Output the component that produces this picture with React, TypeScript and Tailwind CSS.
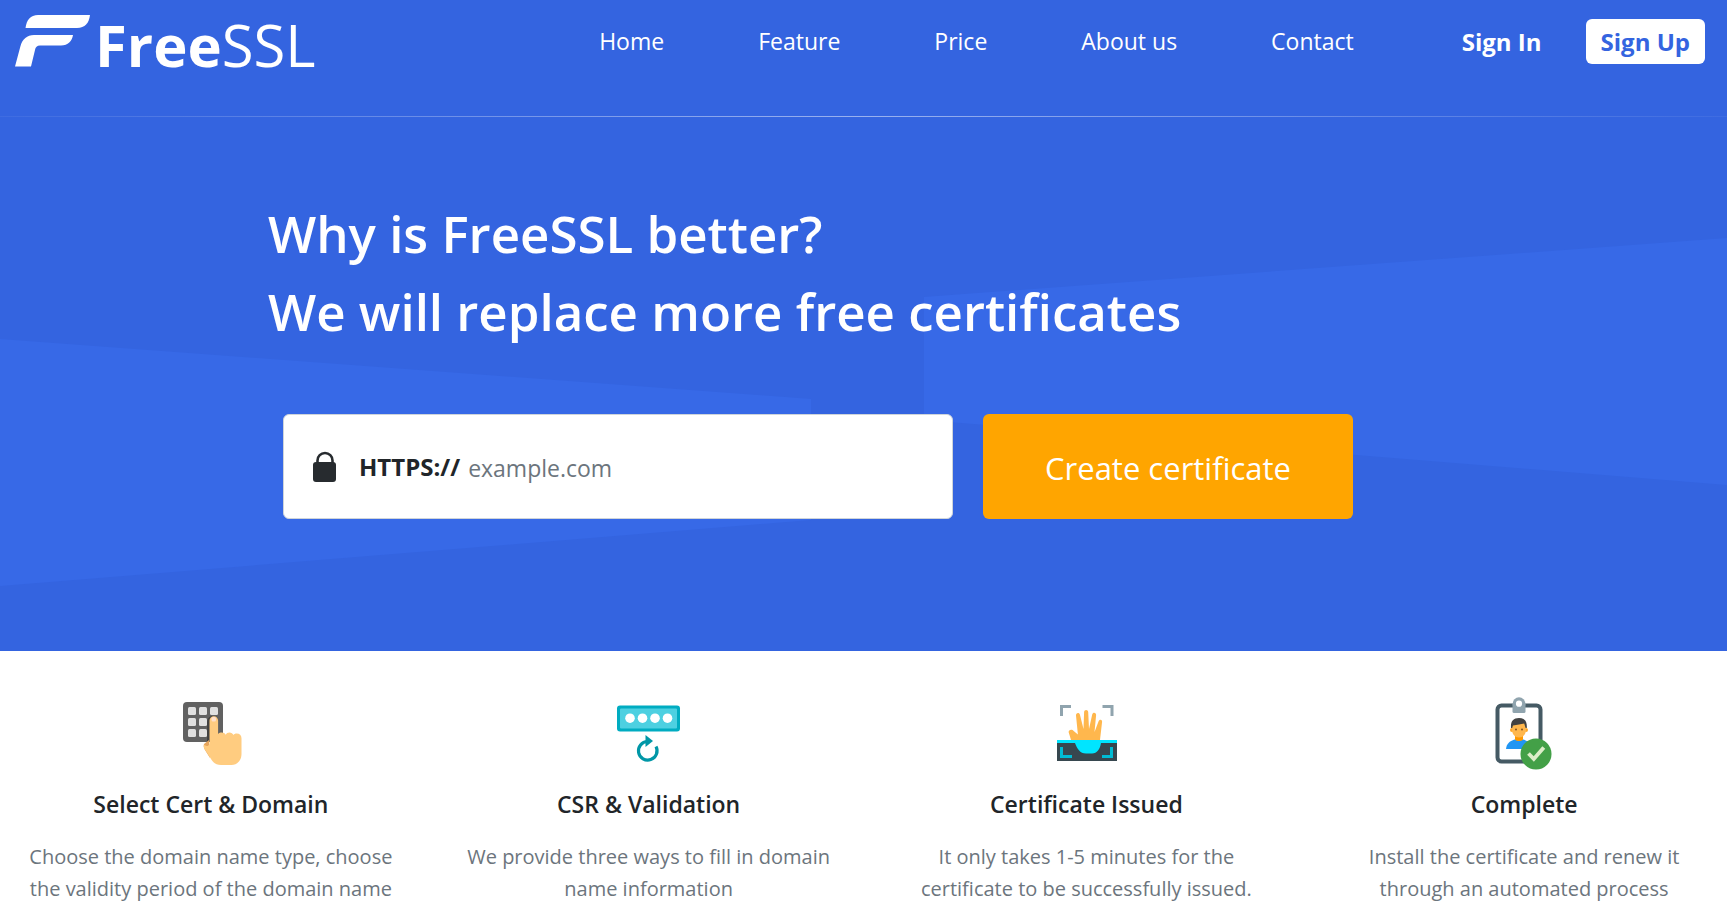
import React, { useState } from "react";

interface Step {
  title: string;
  text: string;
  icon: React.ReactElement;
}

const navLinks = [
  { label: "Home", href: "#home" },
  { label: "Feature", href: "#feature" },
  { label: "Price", href: "#price" },
  { label: "About us", href: "#about" },
  { label: "Contact", href: "#contact" },
];

function KeypadIcon() {
  return (
    <svg className="h-18 w-18 overflow-visible" viewBox="0 0 72 72" aria-hidden="true">
      <rect x="8" y="6" width="40" height="40" rx="4" fill="#616161" />
      <g fill="#e0e0e0">
        <rect x="13" y="11" width="8" height="8" rx="1.5" />
        <rect x="24" y="11" width="8" height="8" rx="1.5" />
        <rect x="35" y="11" width="8" height="8" rx="1.5" />
        <rect x="13" y="22" width="8" height="8" rx="1.5" />
        <rect x="24" y="22" width="8" height="8" rx="1.5" />
        <rect x="13" y="33" width="8" height="8" rx="1.5" />
        <rect x="24" y="33" width="8" height="8" rx="1.5" />
      </g>
      <path d="M32 46V26c0-3 2-5.500 5-6l6 3v23z" fill="#424242" />
      <path d="M34 44l-5 4c-1 2 0 4 1 6l5 8z" fill="#e6a45b" />
      <path
        d="M34.500 24.500a4.300 4.300 0 0 1 8.600 0V38c1-1.200 2.200-1.600 3.600-1.600 2 0 3.200.8 4 2.300.9-1.600 2-2.300 3.700-2.300 2 0 3.300 1 4 2.700.8-1 1.800-1.500 3.200-1.500 3 0 4.900 2 4.900 4.700V58c0 6-4 11-10 11H46c-4 0-7-1.500-9-4.500L29.500 53c-.8-1.300-.8-3 0-4.300 2 2.200 4 1.500 5-1z"
        fill="#ffcc80"
      />
      <rect x="36.500" y="21" width="4.500" height="4.500" rx="1.500" fill="#ffe0cc" />
    </svg>
  );
}

function PasswordIcon() {
  return (
    <svg className="h-18 w-18 overflow-visible" viewBox="0 0 72 72" aria-hidden="true">
      <rect x="4" y="9.500" width="63" height="26" rx="3" fill="#00acc1" />
      <rect x="7" y="12.500" width="57" height="20" rx="1" fill="#4dd0e1" />
      <g fill="#fff">
        <circle cx="17" cy="22.200" r="4.800" />
        <circle cx="29.500" cy="22.200" r="4.800" />
        <circle cx="42" cy="22.200" r="4.800" />
        <circle cx="54.500" cy="22.200" r="4.800" />
      </g>
      <path
        d="M34.500 45.500A9.300 9.300 0 1 0 43 50.500"
        fill="none"
        stroke="#0097a7"
        strokeWidth="3.200"
      />
      <path d="M32.500 39l7.500 6-7.500 6z" fill="#0097a7" />
    </svg>
  );
}

function ScanHandIcon() {
  return (
    <svg className="h-18 w-18 overflow-visible" viewBox="0 0 72 72" aria-hidden="true">
      <path
        d="M10 20V9h11v3h-8v8zM63.500 20V9h-11v3h8v8z"
        fill="#90a4ae"
      />
      <path
        d="M21 44l-1.500-5-.8-2.500c-.5-3 3.500-3.500 5-1.500l4.200 3.500L26 19.500c-.3-2.800 3.400-3.400 4-.6L33.500 33l.6-17c.1-2.800 4-2.800 4.100 0L39 33l3.200-14.500c.7-2.700 4.300-2 3.900.8L44.500 36l4.200-11c1-2.200 3.600-1.600 3.400.7L50 44z"
        fill="#ffb74d"
      />
      <path d="M7 44h60v21H7z" fill="#37474f" />
      <path d="M7 44h60v3H51c-1 6-4 10.500-9 10.500h-6c-6 0-9-5-11-10.500H7z" fill="#00e5ff" />
      <path
        d="M10 51h3v8h9v3H10zM63 51h-3v8h-8v3h11z"
        fill="#00bcd4"
      />
    </svg>
  );
}

function BadgeIcon() {
  return (
    <svg className="h-18 w-18 overflow-visible" viewBox="0 0 72 72" aria-hidden="true">
      <rect x="9.500" y="9.500" width="43" height="56" rx="4" fill="#fff" stroke="#455a64" strokeWidth="4" />
      <rect x="24.500" y="7" width="13" height="10" rx="1.500" fill="#90a4ae" />
      <circle cx="31" cy="7.700" r="6.400" fill="#90a4ae" />
      <circle cx="31" cy="7.700" r="3.100" fill="#fff" />
      <path d="M18 53c.5-5 3.500-8 8.500-9.500h9c5 1.500 8 4.500 8.500 9.500z" fill="#2196f3" />
      <path d="M27 40h8v3.500c-1.500 2-6.500 2-8 0z" fill="#ff9800" />
      <circle cx="24" cy="34" r="2" fill="#ffa726" />
      <circle cx="38" cy="34" r="2" fill="#ffa726" />
      <path d="M24 28c0-5 14-5 14 0v6c0 4-3 7.500-7 7.500s-7-3.500-7-7.500z" fill="#ffb74d" />
      <path d="M23 32c-.5-6.500 2-10 8-10 6.200 0 8.200 4 7.800 10h-1.200l-1.400-4.500-5.200 1-6 1-.8 2.500z" fill="#424242" />
      <circle cx="28" cy="33.500" r=".9" fill="#784719" />
      <circle cx="34" cy="33.500" r=".9" fill="#784719" />
      <circle cx="48" cy="58" r="15.500" fill="#43a047" />
      <path d="M40.500 57.500l5.300 5.500 10-11.500" fill="none" stroke="#dcedc8" strokeWidth="3.800" />
    </svg>
  );
}

const steps: Step[] = [
  {
    title: "Select Cert & Domain",
    text: "Choose the domain name type, choose the validity period of the domain name",
    icon: <KeypadIcon />,
  },
  {
    title: "CSR & Validation",
    text: "We provide three ways to fill in domain name information",
    icon: <PasswordIcon />,
  },
  {
    title: "Certificate Issued",
    text: "It only takes 1-5 minutes for the certificate to be successfully issued.",
    icon: <ScanHandIcon />,
  },
  {
    title: "Complete",
    text: "Install the certificate and renew it through an automated process",
    icon: <BadgeIcon />,
  },
];

function Logo() {
  return (
    <a href="#home" className="flex items-start" aria-label="FreeSSL">
      <svg className="mt-3.5 h-14 w-20" viewBox="0 0 80 56" fill="#fff" aria-hidden="true">
        <path d="M10.500 14C11.500 6 15.500 1 23 1H75C74 9 70 14 62 14z" />
        <path d="M0 52.500L5.500 32C7.500 25 12 21 19 21H58C57 27 53 31.500 46 31.500H25C22 31.500 20.500 33 20 36L16 52.500z" />
      </svg>
      <span className="mt-[7px] text-[58px] leading-[76px]">
        <span className="font-bold">Free</span>
        <span>SSL</span>
      </span>
    </a>
  );
}

function Header() {
  return (
    <header>
      <div className="flex h-29 items-start justify-between pr-[22px] pl-[15px]">
        <Logo />
        <div className="flex items-center pt-[19px]">
          <nav className="flex gap-[94px] text-[23px] leading-[45px]">
            {navLinks.map((link) => (
              <a key={link.label} href={link.href}>
                {link.label}
              </a>
            ))}
          </nav>
          <a href="#signin" className="ml-27 text-2xl leading-[45px] font-bold">
            Sign In
          </a>
          <a
            href="#signup"
            className="ml-11 rounded-md bg-white px-[15px] text-2xl leading-[45px] font-bold text-[#3464e0]"
          >
            Sign Up
          </a>
        </div>
      </div>
      <div className="h-px bg-linear-to-r from-white/5 via-white/50 to-white/5" />
    </header>
  );
}

function Hero() {
  const [domain, setDomain] = useState("");

  return (
    <div className="relative bg-[#3464e0] pb-33 text-white">
      <svg
        className="absolute inset-0 h-full w-full"
        viewBox="0 0 1727 651"
        preserveAspectRatio="none"
        fill="#3769e7"
        aria-hidden="true"
      >
        <path d="M0 339L811 399V520L0 586z" />
        <path d="M924 297L1727 238V485L924 420z" />
      </svg>
      <div className="relative">
        <Header />
        <div className="px-67 pt-[77px]">
          <h1 className="text-[51px] leading-[78px] font-semibold">
            Why is FreeSSL better?
            <br />
            We will replace more free certificates
          </h1>
          <form
            className="mt-16 flex gap-[30px] pl-[15px]"
            onSubmit={(e) => e.preventDefault()}
          >
            <div className="flex h-[105px] w-[670px] items-center rounded-md border border-[#ced4da] bg-white pl-[29px] text-[#212529]">
              <svg className="h-8 w-6" viewBox="0 0 24 32" aria-hidden="true">
                <path d="M4.500 13V9.500a7.500 7.500 0 0 1 15 0V13" fill="none" stroke="#272b2f" strokeWidth="2.600" />
                <rect x="0" y="11" width="23" height="20" rx="3" fill="#272b2f" />
              </svg>
              <label htmlFor="domain" className="ml-[22px] text-2xl font-bold">
                HTTPS://
              </label>
              <input
                id="domain"
                type="text"
                value={domain}
                onChange={(e) => setDomain(e.target.value)}
                placeholder="example.com"
                className="ml-2 h-16 min-w-0 flex-1 bg-transparent pt-0.5 text-[23px] outline-none placeholder:text-[#6c757d]"
              />
            </div>
            <button
              type="submit"
              className="h-[105px] w-[370px] rounded-md bg-[#ffa500] pt-1 text-[31px]"
            >
              Create certificate
            </button>
          </form>
        </div>
      </div>
    </div>
  );
}

function StepCard({ step }: { step: Step }) {
  return (
    <div className="flex flex-col items-center text-center">
      {step.icon}
      <h2 className="mt-5 text-[23px] leading-8 font-semibold text-[#212529]">
        {step.title}
      </h2>
      <p className="mt-[21px] max-w-[376px] text-[20px] leading-8 text-[#6c757d]">
        {step.text}
      </p>
    </div>
  );
}

export default function App() {
  return (
    <div className="bg-white font-['Open_Sans','Noto_Sans',sans-serif]">
      <Hero />
      <main className="grid grid-cols-4 gap-8 pt-[45px] pl-2">
        {steps.map((step) => (
          <StepCard key={step.title} step={step} />
        ))}
      </main>
    </div>
  );
}
